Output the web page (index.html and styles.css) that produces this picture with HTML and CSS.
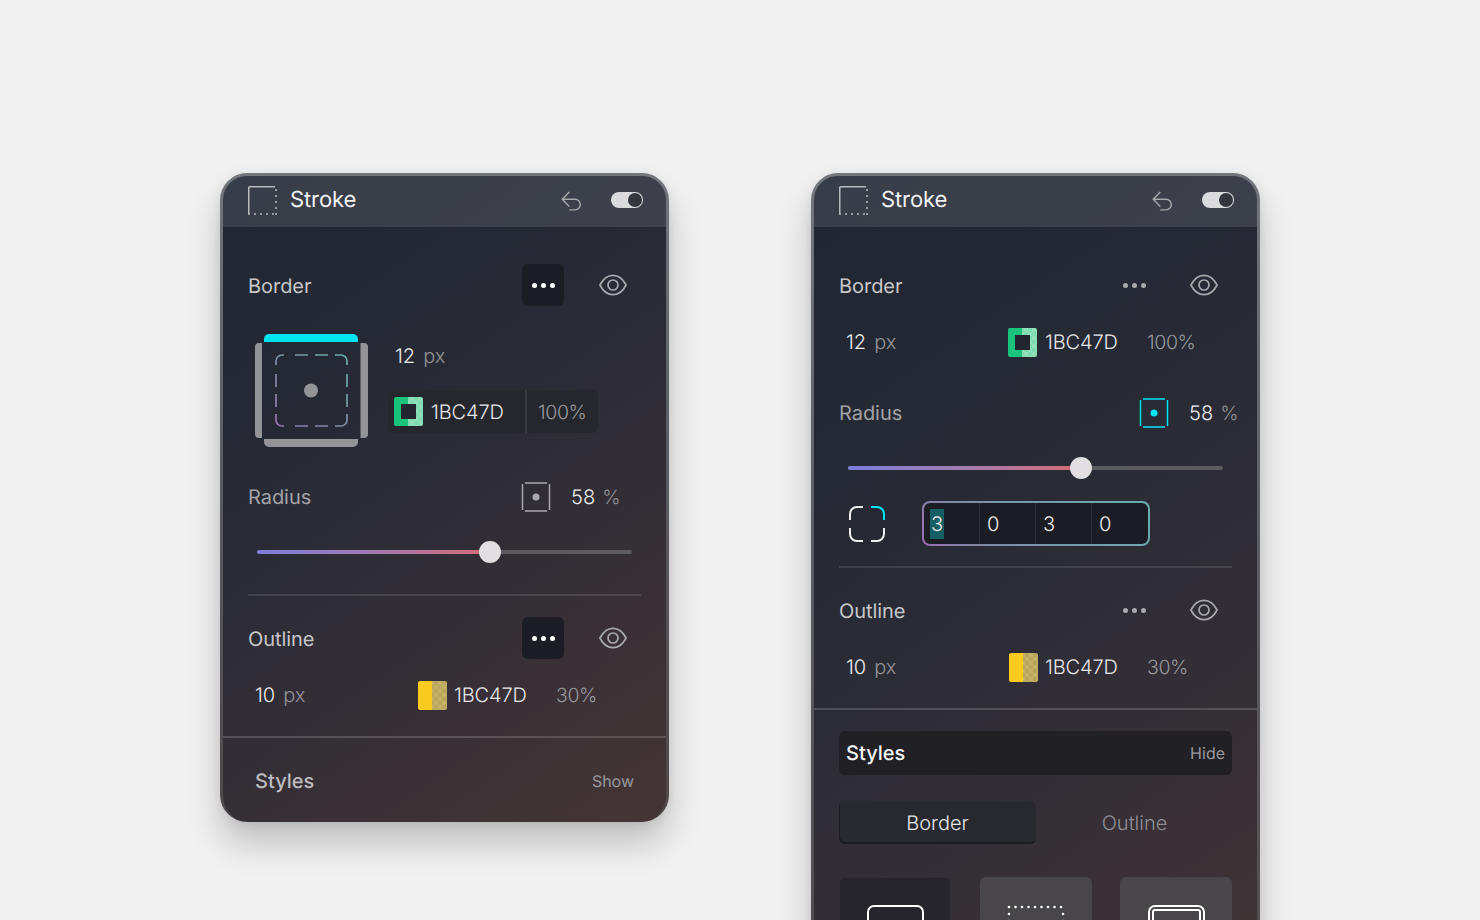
FILE: index.html
```html
<!DOCTYPE html>
<html lang="en">
<head>
<meta charset="utf-8">
<title>Stroke</title>
<link rel="stylesheet" href="styles.css">
</head>
<body>
<svg class="defs" width="0" height="0" aria-hidden="true">
  <defs>
    <symbol id="i-stroke" viewBox="0 0 29 29">
      <path d="M.75 28V1.6A.85.85 0 0 1 1.6.75H27" fill="none" stroke="#b9babd" stroke-width="1.5"/>
      <g fill="#b9babd"><circle cx="1" cy="28" r="1"/><circle cx="7" cy="28" r="1"/><circle cx="13" cy="28" r="1"/><circle cx="19" cy="28" r="1"/><circle cx="25" cy="28" r="1"/><circle cx="28" cy="28" r="1"/><circle cx="28" cy="22" r="1"/><circle cx="28" cy="16" r="1"/><circle cx="28" cy="10" r="1"/><circle cx="28" cy="4" r="1"/></g>
    </symbol>
    <symbol id="i-undo" viewBox="0 0 20 20">
      <path d="M8.3 1 1.2 8.3l7.1 7.2M1.2 8.3H14a5 5 0 0 1 0 10.6H8.2" fill="none" stroke="#a7a8ac" stroke-width="1.4"/>
    </symbol>
    <symbol id="i-eye" viewBox="0 0 28 22">
      <path d="M.9 11C4 5 8.600 1.300 14 1.300S24 5 27.100 11C24 17 19.400 20.700 14 20.700S4 17 .9 11Z" fill="none" stroke="#a8a9ad" stroke-width="1.7"/>
      <circle cx="14" cy="11" r="5" fill="none" stroke="#a8a9ad" stroke-width="1.7"/>
    </symbol>
    <symbol id="i-radius" viewBox="0 0 30 30">
      <path d="M1.500 2v26M28.500 2v26M4 .9h22M4 29.100h22" fill="none" stroke="currentColor" stroke-width="1.500"/>
      <circle cx="15" cy="15" r="3.500" fill="currentColor"/>
    </symbol>
    <linearGradient id="dash-grad" x1="0" y1="1" x2="1" y2="0">
      <stop offset="0" stop-color="#9b74b4"/>
      <stop offset=".5" stop-color="#7c8ea3"/>
      <stop offset="1" stop-color="#69aeac"/>
    </linearGradient>
  </defs>
</svg>

<main class="stage">
  <section class="panel">
    <header class="head">
      <svg class="head-icon"><use href="#i-stroke"/></svg>
      <h1 class="head-title">Stroke</h1>
      <svg class="undo"><use href="#i-undo"/></svg>
      <span class="toggle"><span class="toggle-knob"></span></span>
    </header>
    <div class="body">
      <div class="row">
        <span class="label">Border</span>
        <span class="more more-on"><i></i><i></i><i></i></span>
        <svg class="eye"><use href="#i-eye"/></svg>
      </div>
      <div class="preview">
        <svg class="preview-box" viewBox="0 0 113 113" width="113" height="113">
          <path d="M9 8V5a5 5 0 0 1 5-5h84a5 5 0 0 1 5 5v3Z" fill="#00e5f2"/>
          <path d="M7 9v95H4a4 4 0 0 1-4-4V13a4 4 0 0 1 4-4ZM105.500 9v95h3.500a4 4 0 0 0 4-4V13a4 4 0 0 0-4-4ZM9 105v3a5 5 0 0 0 5 5h84a5 5 0 0 0 5-5v-3Z" fill="#949498"/>
          <g fill="none" stroke="url(#dash-grad)" stroke-width="1.700">
            <path d="M21 31v-4a6 6 0 0 1 6-6h2M40 21h13M60 21h13M80 21h6a6 6 0 0 1 6 6v4M92 40v13M92 60v13M92 80v6a6 6 0 0 1-6 6h-6M73 92H60M53 92H40M29 92h-2a6 6 0 0 1-6-6v-6M21 73V60M21 53V40"/>
          </g>
          <circle cx="56" cy="56.500" r="7" fill="#949498"/>
        </svg>
        <div class="preview-side">
          <div class="value preview-value"><span class="num">12</span><span class="unit">px</span></div>
          <div class="chip">
            <span class="chip-color">
              <span class="swatch swatch-green"><span class="swatch-hole"></span></span>
              <span class="hex">1BC47D</span>
            </span>
            <span class="chip-pct">100%</span>
          </div>
        </div>
      </div>
      <div class="radius-row radius-row-a">
        <span class="label label-dim">Radius</span>
        <svg class="radius-icon"><use href="#i-radius"/></svg>
        <span class="num radius-num">58</span><span class="unit radius-unit">%</span>
      </div>
      <div class="slider"><div class="slider-fill slider-fill-a"></div><span class="slider-knob slider-knob-a"></span></div>
      <hr class="rule rule-a">
      <div class="row row-after-rule">
        <span class="label">Outline</span>
        <span class="more more-on"><i></i><i></i><i></i></span>
        <svg class="eye"><use href="#i-eye"/></svg>
      </div>
      <div class="values">
        <div class="value"><span class="num">10</span><span class="unit">px</span></div>
        <span class="swatch swatch-yellow"></span>
        <span class="hex hex-col">1BC47D</span>
        <span class="pct">30%</span>
      </div>
    </div>
    <hr class="rule rule-full">
    <div class="styles-closed">
      <span class="styles-name">Styles</span>
      <span class="styles-link">Show</span>
    </div>
  </section>

  <section class="panel">
    <header class="head">
      <svg class="head-icon"><use href="#i-stroke"/></svg>
      <h1 class="head-title">Stroke</h1>
      <svg class="undo"><use href="#i-undo"/></svg>
      <span class="toggle"><span class="toggle-knob"></span></span>
    </header>
    <div class="body">
      <div class="row">
        <span class="label">Border</span>
        <span class="more"><i></i><i></i><i></i></span>
        <svg class="eye"><use href="#i-eye"/></svg>
      </div>
      <div class="values">
        <div class="value"><span class="num">12</span><span class="unit">px</span></div>
        <span class="swatch swatch-green swatch-shift"><span class="swatch-hole"></span></span>
        <span class="hex hex-col">1BC47D</span>
        <span class="pct">100%</span>
      </div>
      <div class="radius-row radius-row-b">
        <span class="label label-dim">Radius</span>
        <svg class="radius-icon radius-icon-on"><use href="#i-radius"/></svg>
        <span class="num radius-num">58</span><span class="unit radius-unit">%</span>
      </div>
      <div class="slider"><div class="slider-fill slider-fill-a"></div><span class="slider-knob slider-knob-a"></span></div>
      <div class="corners">
        <svg class="corners-icon" viewBox="0 0 36 36" width="36" height="36" fill="none" stroke-width="2">
          <path d="M14 1H8a7 7 0 0 0-7 7v6M1 22v6a7 7 0 0 0 7 7h6M22 35h6a7 7 0 0 0 7-7v-6" stroke="#eeeeef"/>
          <path d="M22 1h6a7 7 0 0 1 7 7v6" stroke="#00e5f2"/>
        </svg>
        <div class="corner-input">
          <span class="corner-cell"><span class="corner-sel">3</span></span>
          <span class="corner-cell">0</span>
          <span class="corner-cell">3</span>
          <span class="corner-cell">0</span>
        </div>
      </div>
      <hr class="rule rule-b">
      <div class="row row-after-rule">
        <span class="label">Outline</span>
        <span class="more"><i></i><i></i><i></i></span>
        <svg class="eye"><use href="#i-eye"/></svg>
      </div>
      <div class="values">
        <div class="value"><span class="num">10</span><span class="unit">px</span></div>
        <span class="swatch swatch-yellow"></span>
        <span class="hex hex-col">1BC47D</span>
        <span class="pct">30%</span>
      </div>
    </div>
    <hr class="rule rule-full">
    <div class="styles-open">
      <div class="styles-bar">
        <span class="styles-name styles-name-on">Styles</span>
        <span class="styles-link">Hide</span>
      </div>
      <div class="tabs">
        <span class="tab tab-on">Border</span>
        <span class="tab">Outline</span>
      </div>
      <div class="tiles">
        <div class="tile tile-on"><span class="tile-shape"></span></div>
        <div class="tile">
          <svg class="tile-dots" viewBox="0 0 58 58" width="58" height="58" fill="#fff">
            <g><circle cx="2" cy="2" r="1.300"/><circle cx="8.500" cy="2" r="1.300"/><circle cx="15" cy="2" r="1.300"/><circle cx="21.500" cy="2" r="1.300"/><circle cx="28" cy="2" r="1.300"/><circle cx="34.500" cy="2" r="1.300"/><circle cx="41" cy="2" r="1.300"/><circle cx="47.500" cy="2" r="1.300"/><circle cx="54" cy="2" r="1.300"/><circle cx="2" cy="9" r="1.300"/><circle cx="56" cy="9" r="1.300"/><circle cx="2" cy="16" r="1.300"/><circle cx="56" cy="16" r="1.300"/></g>
          </svg>
        </div>
        <div class="tile"><span class="tile-shape tile-double"></span></div>
      </div>
    </div>
  </section>
</main>
</body>
</html>
```

FILE: styles.css
```css
* { box-sizing: border-box; }

html, body { margin: 0; height: 920px; overflow: hidden; }

body {
  background: #f1f1f1;
  font-family: Inter, "Liberation Sans", sans-serif;
  font-size: 20px;
  font-weight: 350;
  color: #ececee;
  text-rendering: geometricPrecision;
}

.defs { position: absolute; }

.stage {
  display: flex;
  align-items: flex-start;
  gap: 142px;
  padding: 173px 0 0 220px;
}

.panel {
  width: 449px;
  flex: none;
  border: 3px solid transparent;
  border-bottom: 0;
  border-radius: 27px;
  background:
    linear-gradient(146deg, #1f2632 0%, #272a35 35%, #352f36 68%, #453535 100%) padding-box,
    linear-gradient(180deg, #74767d 0%, #5c5e66 40%, #4e4748 100%) border-box;
  box-shadow: 0 22px 34px rgba(0, 0, 0, .2), 0 2px 12px rgba(0, 0, 0, .08);
}

.panel:first-child { height: 649px; }
.panel:last-child { height: 900px; }

/* header */
.head {
  display: flex;
  align-items: center;
  height: 51px;
  padding: 0 23px 2px 25px;
  border-radius: 24px 24px 0 0;
  background: rgba(255, 255, 255, .11);
}

.head-icon { width: 29px; height: 29px; flex: none; }

.head-title {
  flex: 1;
  margin: 0 0 2px 13px;
  font-size: 22px;
  font-weight: 400;
  letter-spacing: -.1px;
  color: #f1f1f3;
}

.undo { width: 20px; height: 20px; flex: none; }

.toggle {
  width: 32px;
  height: 16px;
  margin: 0 0 1px 30px;
  padding: 1px;
  border-radius: 8px;
  background: #dbdbdd;
  display: flex;
  justify-content: flex-end;
  flex: none;
}

.toggle-knob {
  width: 14px;
  height: 14px;
  border-radius: 50%;
  background: #35373f;
}

/* body */
.body { padding: 37px 25px 26px; }

.row {
  display: flex;
  align-items: center;
  height: 42px;
}

.row-after-rule { margin-top: 21px; }

.label { flex: 1; color: #c7c7ca; padding-top: 1px; font-weight: 400; letter-spacing: -.05px; }
.label-dim { color: #a3a3a7; padding-top: 0; }

.more {
  display: flex;
  align-items: center;
  justify-content: center;
  gap: 4px;
  width: 42px;
  height: 42px;
  border-radius: 6px;
  flex: none;
}

.more i {
  width: 5px;
  height: 5px;
  border-radius: 50%;
  background: #a8a9ad;
}

.more-on { background: #1c1d24; }
.more-on i { background: #fff; }

.eye {
  width: 28px;
  height: 22px;
  margin: 0 14px 0 35px;
  flex: none;
}

.value { display: flex; gap: 8px; }
.num { color: #ececee; }
.unit { color: #929296; }

.values {
  display: flex;
  align-items: center;
  height: 30px;
  margin-top: 21px;
  padding-left: 7px;
}

.values .value { width: 163px; }

.swatch {
  position: relative;
  display: block;
  width: 29px;
  height: 29px;
  border-radius: 2px;
  flex: none;
}

.swatch-shift { margin-left: -1px; margin-right: 1px; }

.swatch-green {
  background:
    linear-gradient(90deg, #1bc47d 50%, transparent 50%),
    repeating-conic-gradient(#7fdcb1 0 25%, #8fe1bc 0 50%) 0 0 / 8px 8px;
}

.swatch-yellow {
  background:
    linear-gradient(90deg, #fbcb20 50%, transparent 50%),
    repeating-conic-gradient(#c6b164 0 25%, #b9a65e 0 50%) 0 0 / 8px 8px;
}

.swatch-hole {
  position: absolute;
  top: 7px;
  left: 7px;
  width: 15px;
  height: 15px;
  background: #23262f;
}

.hex { color: #e6e6e8; letter-spacing: -.15px; }
.hex-col { width: 102px; margin-left: 7px; flex: none; }
.pct { color: #98989c; font-size: 19.500px; letter-spacing: -.4px; }

/* preview */
.preview {
  display: flex;
  margin-top: 28px;
  padding-left: 7px;
}

.preview-box { flex: none; }

.preview-side {
  display: flex;
  flex-direction: column;
  margin-left: 20px;
}

.preview-value { height: 24px; margin: 10px 0 0 7px; align-items: center; }

.chip {
  display: flex;
  width: 210px;
  height: 43px;
  margin-top: 22px;
  border-radius: 6px;
  background: #26272d;
}

.chip-color {
  display: flex;
  align-items: center;
  gap: 8px;
  width: 139px;
  padding-left: 6px;
  border-right: 2px solid #3a3b41;
}

.chip-pct {
  display: flex;
  align-items: center;
  padding-left: 11px;
  color: #98989c;
  font-size: 19.500px;
  letter-spacing: -.4px;
}

/* radius */
.radius-row {
  display: flex;
  align-items: center;
  height: 30px;
}

.radius-row-a { margin-top: 35px; padding-right: 21px; }
.radius-row-b { margin-top: 41px; margin-right: -6px; }

.radius-icon { width: 30px; height: 30px; color: #a8a9ad; flex: none; }
.radius-icon-on { color: #00e5f2; }
.radius-num { margin-left: 20px; margin-right: 7px; }
.radius-unit { font-size: 19.500px; letter-spacing: -.4px; }

.slider {
  position: relative;
  display: flex;
  align-items: center;
  height: 22px;
  margin: 29px 9px 0;
}

.slider::before {
  content: "";
  width: 100%;
  height: 4px;
  border-radius: 2px;
  background: #5c5b60;
}

.slider-fill {
  position: absolute;
  left: 0;
  height: 4px;
  border-radius: 2px;
  background: linear-gradient(90deg, #7c7fdc, #a37cb0 50%, #d56b74);
}

.slider-fill-a { width: 232px; }

.slider-knob {
  position: absolute;
  top: 0;
  width: 22px;
  height: 22px;
  border-radius: 50%;
  background: #e1dfe1;
}

.slider-knob-a { left: 221.500px; }

/* corners */
.corners {
  display: flex;
  align-items: center;
  margin-top: 22px;
  padding-left: 10px;
}

.corners-icon { flex: none; }

.corner-input {
  display: grid;
  grid-template-columns: repeat(4, 56px);
  width: 228px;
  height: 45px;
  margin-left: 37px;
  border: 2px solid transparent;
  border-radius: 8px;
  background:
    linear-gradient(#1c1d24, #1c1d24) padding-box,
    linear-gradient(50deg, #9a6fb0, #7f8ca5 25%, #66aeb0) border-box;
}

.corner-cell {
  display: flex;
  align-items: center;
  padding: 1px 0 0 7px;
  border-right: 1px solid #303138;
}

.corner-cell:last-child { border-right: 0; }

.corner-sel {
  padding: 3px 1px;
  margin-left: -1px;
  background: #155e63;
}

/* rules */
.rule { margin: 0; border: 0; height: 2px; background: rgba(255, 255, 255, .11); }
.rule-a { margin-top: 31px; }
.rule-b { margin-top: 20px; }
.rule-full { background: rgba(255, 255, 255, .16); }

/* styles */
.styles-closed {
  display: flex;
  align-items: center;
  justify-content: space-between;
  height: 86px;
  padding: 0 32px 0 32px;
}

.styles-name { font-weight: 450; color: #bcbcbf; }
.styles-name-on { color: #f5f5f6; }
.styles-link { font-size: 16px; color: #98989c; font-weight: 400; }

.styles-open { padding: 21px 25px 0; }

.styles-bar {
  display: flex;
  align-items: center;
  justify-content: space-between;
  height: 44px;
  padding: 0 7px;
  border-radius: 6px;
  background: #202025;
}

.tabs {
  display: grid;
  grid-template-columns: 197px 197px;
  margin-top: 26px;
}

.tab {
  display: flex;
  align-items: center;
  justify-content: center;
  height: 43px;
  border-radius: 6px;
  color: #8f8f93;
}

.tab-on {
  color: #e6e6e8;
  background: #28292f;
  box-shadow: inset 1px -2px 0 #1c1d22, inset 0 1px 0 #2c2d33;
}

.tiles {
  display: grid;
  grid-template-columns: repeat(3, 112px);
  justify-content: space-between;
  margin-top: 33px;
}

.tile {
  display: flex;
  justify-content: center;
  height: 112px;
  padding-top: 28px;
  border-radius: 6px;
  background: #48464a;
}

.tile-on {
  background: #25252b;
  box-shadow: inset 0 0 0 1px #2e2e34;
}

.tile-shape {
  display: block;
  width: 57px;
  height: 57px;
  border: 2px solid #fff;
  border-radius: 7px;
}

.tile-dots { flex: none; }
.tile-double { border-style: double; border-width: 6px; }
```
